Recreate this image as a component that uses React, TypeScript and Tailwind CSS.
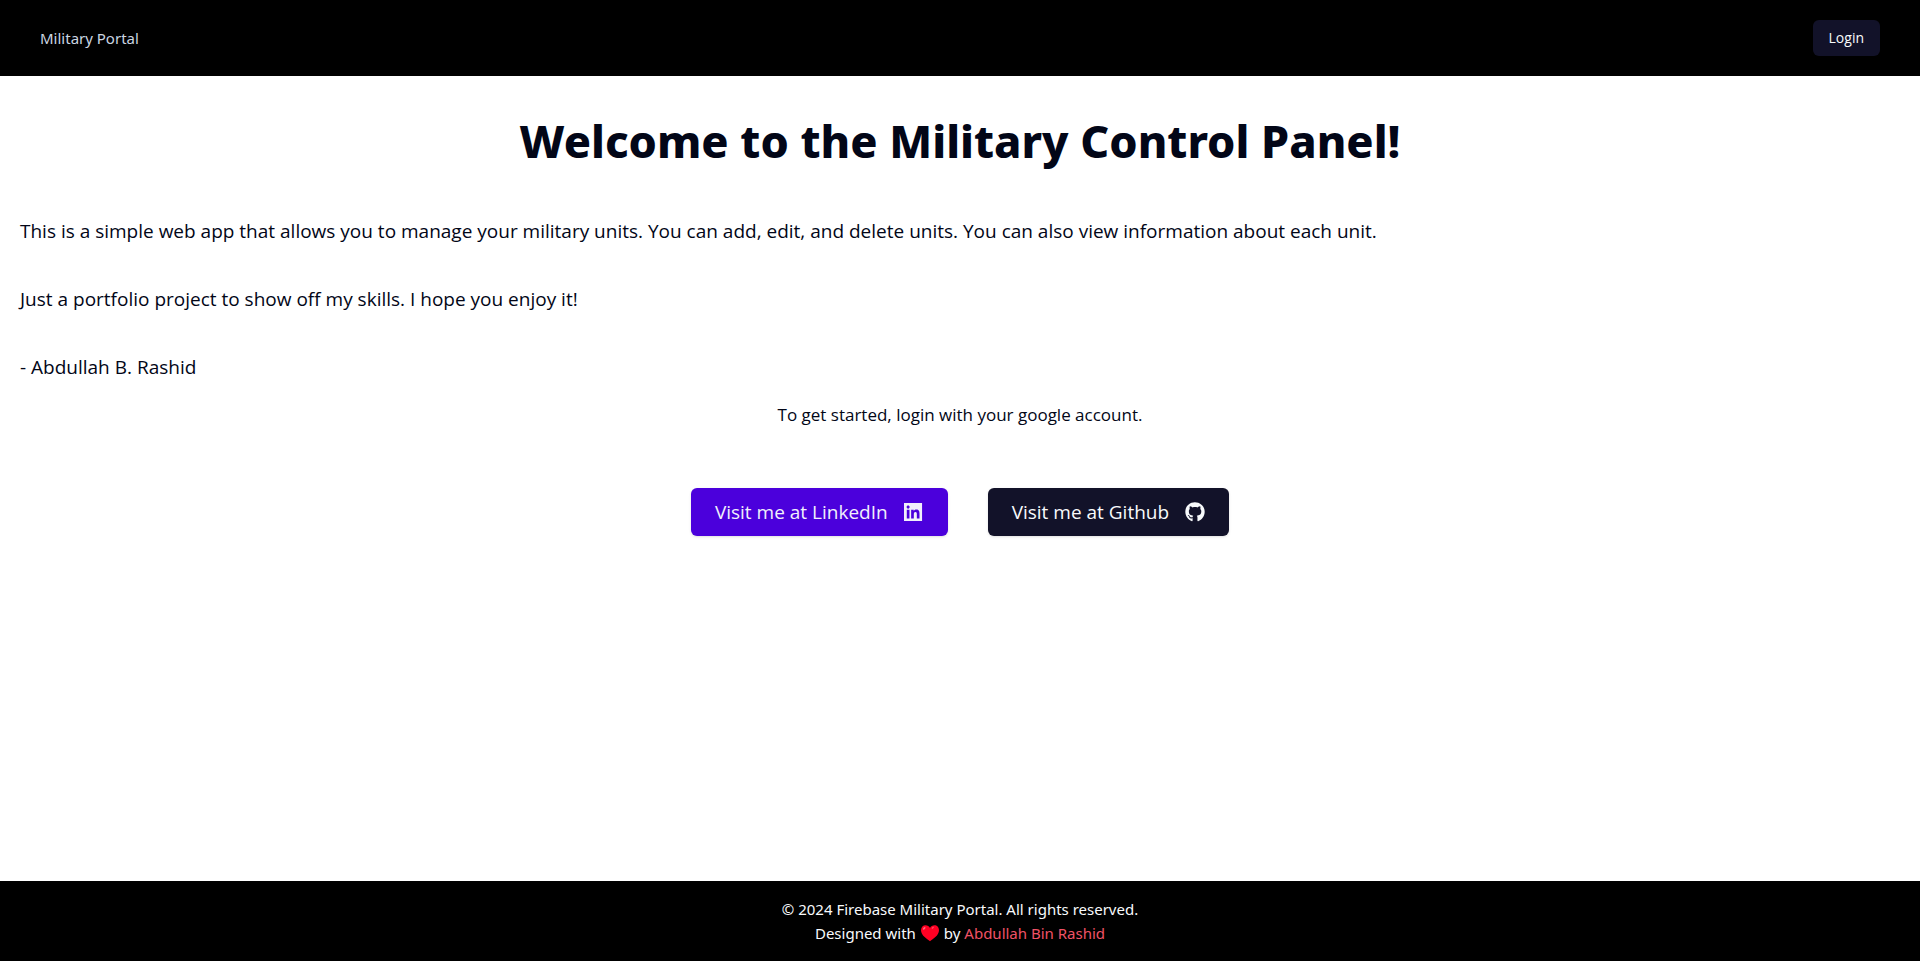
import React from "react";
import { FaGithub } from "react-icons/fa";

function Heart() {
  return (
    <svg viewBox="0 0 20 18" className="mx-1 inline-block h-[18px] w-5 align-[-3px]" role="img" aria-label="love">
      <path
        d="M10 17.300C7 14.800 1 11.400 1 6.200 1 3.100 3.100 1.200 5.500 1.200c2 0 3.600 1 4.500 2.800.9-1.800 2.500-2.800 4.500-2.800C16.900 1.200 19 3.100 19 6.200c0 5.200-6 8.600-9 11.100z"
        fill="#ff0023"
      />
      <ellipse cx="4.200" cy="4.400" rx="1.600" ry="0.900" transform="rotate(-45 4.200 4.400)" fill="#ff6b7f" />
      <ellipse cx="12.800" cy="3.700" rx="1.300" ry="0.700" transform="rotate(-40 12.800 3.700)" fill="#ff5069" />
    </svg>
  );
}

function LinkedIn() {
  return (
    <svg viewBox="0 8 496 496" className="size-5" fill="currentColor" aria-hidden="true">
      <path d="M448 32H0v448h448V32zM135.400 416H69V202.200h66.500V416zm-33.200-243c-21.300 0-38.500-17.300-38.500-38.500S80.900 96 102.200 96c21.200 0 38.500 17.300 38.500 38.500 0 21.300-17.200 38.500-38.500 38.500zm282.100 243h-66.400V312c0-24.800-.5-56.700-34.500-56.700-34.600 0-39.900 27-39.900 54.900V416h-66.400V202.200h63.700v29.200h.9c8.900-16.800 30.600-34.500 62.900-34.500 67.200 0 79.700 44.300 79.700 101.900V416z" fillRule="evenodd" />
    </svg>
  );
}

export default function App() {
  return (
    <div className="flex min-h-screen flex-col bg-white font-['Open_Sans',sans-serif] text-[#020617]">
      <header className="flex items-center justify-between bg-black px-10 py-5">
        <a href="#" className="font-['Noto_Sans',sans-serif] text-[15px] text-[#cbd5e1]">Military Portal</a>
        <button type="button" className="h-9 rounded-md bg-[#121229] px-4 text-sm text-[#f8fafc]">Login</button>
      </header>

      <main className="flex grow flex-col px-5 pt-10">
        <h1 className="text-center font-['Noto_Sans',sans-serif] text-[45px] leading-[50px] font-extrabold">
          Welcome to the Military Control Panel!
        </h1>
        <div className="mt-[51px] flex flex-col gap-10 text-[19px] leading-7">
          <p>
            This is a simple web app that allows you to manage your military units. You can add, edit, and delete units.
            You can also view information about each unit.
          </p>
          <p>Just a portfolio project to show off my skills. I hope you enjoy it!</p>
          <p>- Abdullah B. Rashid</p>
        </div>
        <p className="mt-5 text-center text-[17px] leading-7">To get started, login with your google account.</p>
        <div className="mt-[59px] flex justify-center gap-10">
          <a href="#" className="flex h-12 items-center gap-4 rounded-md bg-[#4b00dc] px-6 text-[19px] text-[#f1f0fb] shadow-sm">
            Visit me at LinkedIn
            <LinkedIn />
          </a>
          <a href="#" className="flex h-12 items-center gap-4 rounded-md bg-[#121229] px-6 text-[19px] text-[#f8fafc] shadow-sm">
            Visit me at Github
            <FaGithub className="size-5" />
          </a>
        </div>
      </main>

      <footer className="bg-black py-4 text-center font-['Noto_Sans',sans-serif] text-[15px] leading-6 text-[#f8fafc]">
        <p>© 2024 Firebase Military Portal. All rights reserved.</p>
        <p>
          Designed with
          <Heart />
          by <a href="#" className="text-[#f05266]">Abdullah Bin Rashid</a>
        </p>
      </footer>
    </div>
  );
}
